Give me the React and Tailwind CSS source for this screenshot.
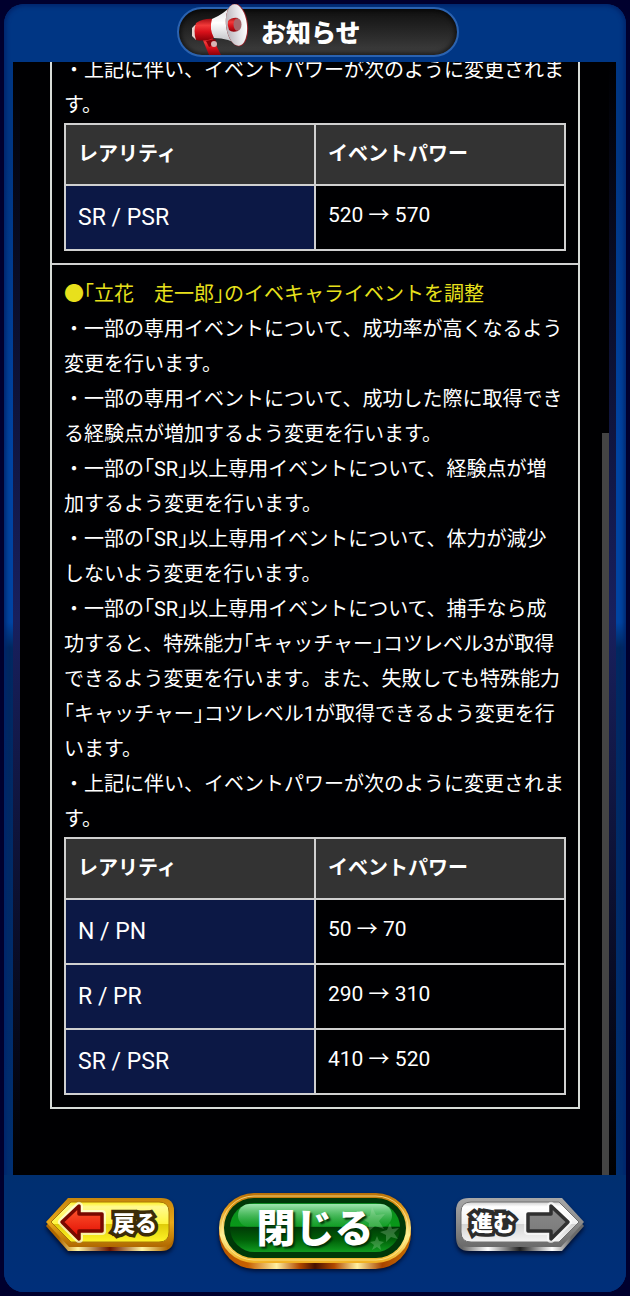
import { useId } from "react";

// Color palette:
// Frame Navy:   #003880 -> #002e70
// Page Edge:    #00002e
// Row Header:   #0c1845
// Table Header: #333333
// Highlight:    #e8e01c

const firstPowers = [{ rarity: "SR / PSR", power: "520 → 570" }];

const secondPowers = [
  { rarity: "N / PN", power: "50 → 70" },
  { rarity: "R / PR", power: "290 → 310" },
  { rarity: "SR / PSR", power: "410 → 520" },
];

const changes = [
  "・一部の専用イベントについて、成功率が高くなるよう変更を行います。",
  "・一部の専用イベントについて、成功した際に取得できる経験点が増加するよう変更を行います。",
  "・一部の｢SR｣以上専用イベントについて、経験点が増加するよう変更を行います。",
  "・一部の｢SR｣以上専用イベントについて、体力が減少しないよう変更を行います。",
  "・一部の｢SR｣以上専用イベントについて、捕手なら成功すると、特殊能力｢キャッチャー｣コツレベル3が取得できるよう変更を行います。また、失敗しても特殊能力｢キャッチャー｣コツレベル1が取得できるよう変更を行います。",
  "・上記に伴い、イベントパワーが次のように変更されます。",
];

function Megaphone() {
  return (
    <svg width="58" height="54" viewBox="0 0 58 54" aria-hidden="true" className="shrink-0">
      <defs>
        <linearGradient id="megaRed" x1="0" y1="0" x2="0" y2="1">
          <stop offset="0" stopColor="#a80d14" />
          <stop offset="0.3" stopColor="#f23a3a" />
          <stop offset="0.6" stopColor="#d8101a" />
          <stop offset="1" stopColor="#8c0008" />
        </linearGradient>
        <linearGradient id="megaWhite" x1="0" y1="0" x2="0" y2="1">
          <stop offset="0" stopColor="#d8d8dc" />
          <stop offset="0.45" stopColor="#ffffff" />
          <stop offset="1" stopColor="#b4b4ba" />
        </linearGradient>
        <linearGradient id="megaBell" x1="0" y1="0" x2="1" y2="0">
          <stop offset="0" stopColor="#b9b4ba" />
          <stop offset="0.6" stopColor="#e6e4e8" />
          <stop offset="1" stopColor="#ffffff" />
        </linearGradient>
      </defs>
      <path d="M11 35L18 52H30L21 34Z" fill="url(#megaRed)" />
      <path d="M15 38L24 36L26 41L18 44Z" fill="#8c0008" />
      <circle cx="23" cy="41" r="3" fill="#d8b4b4" />
      <path d="M4 22L1 25V33L5 37L9 36V21Z" fill="#e4d4d0" />
      <path d="M5 20Q13 15 23 16L25 34Q15 39 5 37Q2 28 5 20Z" fill="url(#megaRed)" />
      <path d="M21 16Q33 11 42 1L49 43Q38 35 23 35Q18 26 21 16Z" fill="url(#megaWhite)" />
      <ellipse cx="46" cy="22" rx="11" ry="21.5" transform="rotate(-7 46 22)" fill="#8d2228" />
      <ellipse cx="45.5" cy="22" rx="10.4" ry="20.8" transform="rotate(-7 45.5 22)" fill="url(#megaBell)" />
      <path d="M37 18Q41 14 47 15V28Q41 30 38 27Q36 22 37 18Z" fill="url(#megaRed)" />
      <ellipse cx="46.5" cy="21.5" rx="4" ry="6.3" fill="#a5656a" />
    </svg>
  );
}

function PowerTable({ rows }) {
  return (
    <table className="w-full table-fixed border-collapse border-2 border-[#d0d0d0] text-left">
      <thead>
        <tr className="bg-[#333333] leading-[35px]">
          <th className="border-2 border-[#d0d0d0] px-3 py-3 font-bold">レアリティ</th>
          <th className="border-2 border-[#d0d0d0] px-3 py-3 font-bold">イベントパワー</th>
        </tr>
      </thead>
      <tbody>
        {rows.map((row) => (
          <tr key={row.rarity} className="align-top">
            <th
              scope="row"
              className="border-2 border-[#d0d0d0] bg-[#0c1845] px-3 py-3 text-[23px] leading-[39px] font-normal"
            >
              {row.rarity}
            </th>
            <td className="border-2 border-[#d0d0d0] px-3 py-3 text-[21px] leading-[35px]">{row.power}</td>
          </tr>
        ))}
      </tbody>
    </table>
  );
}

function SideButton({ label, forward = false }) {
  const id = useId().replace(/[^a-zA-Z0-9]/g, "");
  const rim = forward
    ? ["#a8a8a8", "#8c8c8c", "#6a6a6a", "#ffffff", "#202020"]
    : ["#c8860c", "#e8a818", "#b06800", "#fff3a0", "#6a1400"];
  return (
    <button
      type="button"
      className={
        forward
          ? "relative flex h-[54px] w-[130px] items-center pl-4"
          : "relative flex h-[54px] w-[130px] items-center justify-end pr-[18px]"
      }
    >
      <svg
        viewBox="0 0 130 54"
        aria-hidden="true"
        className="absolute inset-0 h-full w-full overflow-visible drop-shadow-[0_3px_2px_rgba(0,0,20,0.7)]"
      >
        <defs>
          <linearGradient id={`${id}rim`} x1="0" y1="0" x2="0" y2="1">
            <stop offset="0" stopColor={rim[0]} />
            <stop offset="0.5" stopColor={rim[1]} />
            <stop offset="1" stopColor={rim[2]} />
          </linearGradient>
          <linearGradient id={`${id}base`} x1="0" y1="0" x2="1" y2="0">
            <stop offset="0.1" stopColor={rim[2]} />
            <stop offset="0.25" stopColor={rim[3]} />
            <stop offset="0.5" stopColor={rim[4]} />
            <stop offset="0.75" stopColor={rim[3]} />
            <stop offset="0.95" stopColor={rim[2]} />
          </linearGradient>
          <linearGradient id={`${id}face`} x1="0" y1="0" x2="0" y2="1">
            <stop offset="0" stopColor={forward ? "#d0d0d0" : "#fff020"} />
            <stop offset="0.12" stopColor={forward ? "#ffffff" : "#fffa90"} />
            <stop offset="0.54" stopColor={forward ? "#f0f0f0" : "#fff640"} />
            <stop offset="0.56" stopColor={forward ? "#d4d4d4" : "#e0cc08"} />
            <stop offset="1" stopColor={forward ? "#f4f4f4" : "#fff428"} />
          </linearGradient>
          <linearGradient id={`${id}arrow`} x1="0" y1="0" x2="0" y2="1">
            <stop offset="0" stopColor={forward ? "#8a8a8a" : "#ff5a30"} />
            <stop offset="1" stopColor={forward ? "#787878" : "#e00800"} />
          </linearGradient>
        </defs>
        <g transform={forward ? "translate(130 0) scale(-1 1)" : undefined}>
          <path d="M1 29L22 4H118Q129 4 129 16V40Q129 54 116 54H23Z" fill={`url(#${id}base)`} />
          <path d="M1 25L23 1H116Q129 1 129 14V36Q129 50 116 50H24Z" fill={`url(#${id}rim)`} />
          <path
            d="M6 25L26 5H114Q124 5 124 15V35Q124 45 114 45H26Z"
            fill={`url(#${id}face)`}
            stroke={forward ? "#707070" : "#a87808"}
            strokeWidth="1"
          />
          <path
            d="M17 25L34 9V17H57V34H34V42Z"
            fill="none"
            stroke="#ffffff"
            strokeWidth="8"
            strokeLinejoin="round"
            opacity="0.6"
          />
          <path
            d="M17 25L34 9V17H57V34H34V42Z"
            fill={`url(#${id}arrow)`}
            stroke={forward ? "#303030" : "#780800"}
            strokeWidth="3.5"
            strokeLinejoin="round"
          />
        </g>
      </svg>
      <span
        className={
          forward
            ? "relative text-[22px] leading-8 font-black text-white [paint-order:stroke_fill] [-webkit-text-stroke:7px_#2c2c2c]"
            : "relative text-[22px] leading-8 font-black text-white [paint-order:stroke_fill] [-webkit-text-stroke:7px_#3c2c08]"
        }
      >
        {label}
      </span>
    </button>
  );
}

function CloseButton() {
  return (
    <button type="button" className="relative flex h-[76px] w-[192px] items-center justify-center">
      <svg
        viewBox="0 0 192 76"
        aria-hidden="true"
        className="absolute inset-0 h-full w-full overflow-visible drop-shadow-[0_2px_2px_rgba(0,0,20,0.7)]"
      >
        <defs>
          <linearGradient id="closeBase" x1="0" y1="0" x2="1" y2="0">
            <stop offset="0" stopColor="#b85800" />
            <stop offset="0.15" stopColor="#c86000" />
            <stop offset="0.3" stopColor="#fff0a0" />
            <stop offset="0.42" stopColor="#b04800" />
            <stop offset="0.5" stopColor="#481000" />
            <stop offset="0.6" stopColor="#b04800" />
            <stop offset="0.72" stopColor="#fff0a0" />
            <stop offset="0.85" stopColor="#a84400" />
            <stop offset="1" stopColor="#c87000" />
          </linearGradient>
          <linearGradient id="closeRim" x1="0" y1="0" x2="0" y2="1">
            <stop offset="0" stopColor="#b87008" />
            <stop offset="0.2" stopColor="#e09818" />
            <stop offset="0.6" stopColor="#fff090" />
            <stop offset="1" stopColor="#f0b020" />
          </linearGradient>
          <linearGradient id="closeFace" x1="0" y1="0" x2="0" y2="1">
            <stop offset="0" stopColor="#0c8c20" />
            <stop offset="0.47" stopColor="#089818" />
            <stop offset="0.5" stopColor="#003c06" />
            <stop offset="0.75" stopColor="#006008" />
            <stop offset="1" stopColor="#109c20" />
          </linearGradient>
          <linearGradient id="closeGloss" x1="0" y1="0" x2="0" y2="1">
            <stop offset="0" stopColor="#a0e8b0" />
            <stop offset="1" stopColor="#20a838" stopOpacity="0.4" />
          </linearGradient>
        </defs>
        <rect x="0" y="5" width="192" height="71" rx="35.5" fill="url(#closeBase)" />
        <rect x="0" y="0" width="192" height="70" rx="35" fill="url(#closeRim)" />
        <rect x="3" y="3" width="186" height="64" rx="32" fill="none" stroke="#fff0a0" strokeWidth="1" opacity="0.7" />
        <rect x="5" y="5" width="182" height="60" rx="30" fill="#003808" />
        <rect x="11" y="10" width="170" height="49" rx="24.5" fill="url(#closeFace)" />
        <rect x="19" y="11" width="154" height="23" rx="11.5" fill="url(#closeGloss)" />
        <g fill="#b0e0b0" opacity="0.28">
          <path d="M153 14L157 22L166 21L160 28L165 36L156 33L149 39L150 30L142 25L151 23Z" />
          <path d="M171 30L173 36L180 35L175 40L179 46L172 44L167 49L167 42L161 39L168 37Z" />
          <path d="M158 43L160 48L165 49L161 52L162 57L158 54L153 57L155 52L151 49L156 48Z" />
        </g>
      </svg>
      <span className="relative -mt-1 text-[39px] leading-[48px] font-black text-white [text-shadow:2px_2px_2px_#003008]">
        閉じる
      </span>
    </button>
  );
}

export default function App() {
  return (
    <div
      lang="ja"
      className="flex min-h-screen flex-col bg-[#00002e] p-1 font-[Roboto,'Noto_Sans_CJK_JP',sans-serif] text-white"
    >
      <div className="flex flex-1 flex-col overflow-hidden rounded-[20px] bg-[linear-gradient(#003684_0%,#003684_12%,#0044a2_35%,#0044a2_48%,#002860_50%,#002f72_90%,#002f78_100%)] shadow-[inset_0_0_4px_2px_#00246a]">
        <header className="flex h-[58px] shrink-0 justify-center pt-[3px] pl-[6px]">
          <div className="flex h-[50px] w-[282px] items-center rounded-full border-2 border-[#2a62b0] bg-gradient-to-b from-[#101010] to-[#404040] pl-3 shadow-[inset_0_0_4px_2px_rgba(0,0,0,0.6)]">
            <div className="-mt-1">
              <Megaphone />
            </div>
            <h1 className="ml-3 pt-1 text-[25px] leading-8 font-black">お知らせ</h1>
          </div>
        </header>

        {/* Notice body, scrolled part way down */}
        <main className="relative mr-[10px] ml-[9px] flex-1 overflow-hidden bg-[#000002] pr-9 pb-[66px] pl-[37px] text-[20px] leading-[35px]">
          <div className="absolute inset-y-0 left-0 w-[7px] bg-gradient-to-b from-transparent via-[#18205e] to-transparent" />
          <div className="absolute inset-y-0 right-0 w-[7px] bg-gradient-to-b from-transparent via-[#18205e] to-transparent" />
          <div className="absolute top-1/3 right-[7px] bottom-0 w-[7px] bg-[#444444]" />

          <div className="-mt-[9px] border-x-2 border-b-2 border-[#d8dcd8]">
            <section className="px-3 pb-3">
              <p>・上記に伴い、イベントパワーが次のように変更されます。</p>
              <PowerTable rows={firstPowers} />
            </section>

            <section className="border-t-2 border-[#d0d0d0] px-3 py-3">
              <h2 className="text-[#e8e01c]">●｢立花　走一郎｣のイベキャライベントを調整</h2>
              {changes.map((text) => (
                <p key={text}>{text}</p>
              ))}
              <PowerTable rows={secondPowers} />
            </section>
          </div>
        </main>

        <footer className="flex h-[117px] shrink-0 items-start justify-between bg-[linear-gradient(#002f70,#002f7a)] px-[41px] pt-[18px]">
          <div className="pt-1">
            <SideButton label="戻る" />
          </div>
          <CloseButton />
          <div className="pt-1">
            <SideButton label="進む" forward />
          </div>
        </footer>
      </div>
    </div>
  );
}
